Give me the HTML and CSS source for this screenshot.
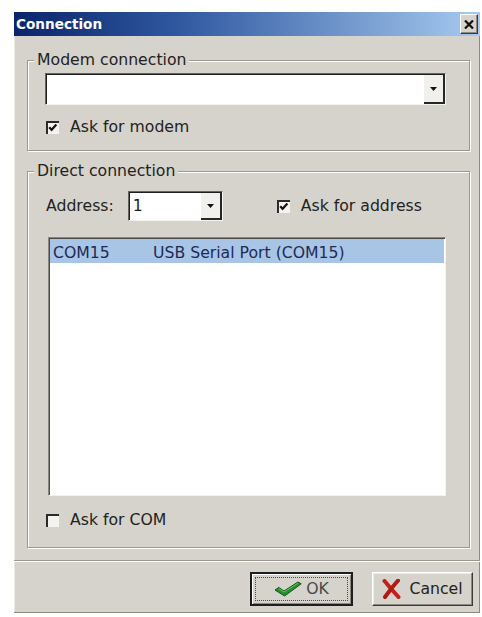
FILE: index.html
```html
<!DOCTYPE html>
<html lang="en">
<head>
<meta charset="utf-8">
<title>Connection</title>
<link rel="stylesheet" href="styles.css">
</head>
<body>
<div class="dialog">
  <div class="titlebar">
    <span class="title">Connection</span>
    <button class="close" type="button" aria-label="Close">
      <svg width="10" height="9" viewBox="0 0 10 9"><path d="M1 0.5 L9 8.5 M9 0.5 L1 8.5" stroke="#111" stroke-width="2.2" fill="none"/></svg>
    </button>
  </div>

  <div class="content">
    <div class="group group-modem">
      <div class="group-title">Modem connection</div>
      <div class="combo combo-modem">
        <div class="combo-value"></div>
        <div class="combo-btn"><svg width="7" height="4" viewBox="0 0 7 4"><path d="M0 0H7L3.5 4Z" fill="#111"/></svg></div>
      </div>
      <label class="check-row">
        <span class="checkbox"><svg width="13" height="13" viewBox="0 0 13 13"><rect width="13" height="13" fill="#f4f3f0"/><path d="M1 13V1H13" stroke="#2a2a2a" stroke-width="2" fill="none"/><path d="M3.2 6.2 L5.6 8.8 L10.4 3.6" stroke="#151515" stroke-width="2.2" fill="none"/></svg></span>
        <span>Ask for modem</span>
      </label>
    </div>

    <div class="group group-direct">
      <div class="group-title">Direct connection</div>
      <div class="address-row">
        <span class="field-label">Address:</span>
        <div class="combo combo-address">
          <div class="combo-value">1</div>
          <div class="combo-btn"><svg width="7" height="4" viewBox="0 0 7 4"><path d="M0 0H7L3.5 4Z" fill="#111"/></svg></div>
        </div>
        <label class="check-row check-address">
          <span class="checkbox"><svg width="13" height="13" viewBox="0 0 13 13"><rect width="13" height="13" fill="#f4f3f0"/><path d="M1 13V1H13" stroke="#2a2a2a" stroke-width="2" fill="none"/><path d="M3.2 6.2 L5.6 8.8 L10.4 3.6" stroke="#151515" stroke-width="2.2" fill="none"/></svg></span>
          <span>Ask for address</span>
        </label>
      </div>

      <div class="listbox">
        <div class="list-row selected">
          <span class="col-port">COM15</span>
          <span class="col-name">USB Serial Port (COM15)</span>
        </div>
      </div>

      <label class="check-row check-com">
        <span class="checkbox"><svg width="13" height="13" viewBox="0 0 13 13"><rect width="13" height="13" fill="#f4f3f0"/><path d="M1 13V1H13" stroke="#2a2a2a" stroke-width="2" fill="none"/></svg></span>
        <span>Ask for COM</span>
      </label>
    </div>
  </div>

  <div class="separator"></div>

  <div class="buttons">
    <button class="btn btn-default" type="button">
      <svg width="28" height="16" viewBox="0 0 28 16"><path d="M1 9 L4.8 6.4 L10 10 L24 1 L27.2 2.8 L10.6 15 Z" fill="#24902c" stroke="#0f5516" stroke-width="1" stroke-linejoin="round"/><path d="M5 7.6 L10 11 L24 2.2" stroke="#78cc7a" stroke-width="0.8" fill="none"/></svg>
      <span>OK</span>
    </button>
    <button class="btn" type="button">
      <svg width="19" height="20" viewBox="0 0 19 20"><path d="M2.5 2 C6 6 10 11 16.5 18" stroke="#c41f1b" stroke-width="4" stroke-linecap="round" fill="none"/><path d="M16 1.5 C12 6 8 11 3 18" stroke="#b01a17" stroke-width="4" stroke-linecap="round" fill="none"/></svg>
      <span>Cancel</span>
    </button>
  </div>
</div>
</body>
</html>
```
FILE: styles.css
```css
* {
  box-sizing: border-box;
}

html,
body {
  margin: 0;
  background: #ffffff;
}

body {
  font-family: "DejaVu Sans", Tahoma, sans-serif;
  font-size: 15.7px;
  line-height: 18px;
  color: #222222;
}

/* window frame */
.dialog {
  margin: 12px 0 0 14px;
  width: 466px;
  height: 601px;
  background: #d6d3cc;
  display: flex;
  flex-direction: column;
  box-shadow: inset -1px -1px 0 #8e8a83, inset 1px 0 0 #ebe9e4;
}

.titlebar {
  height: 24px;
  flex: none;
  display: flex;
  align-items: center;
  justify-content: space-between;
  padding: 0 2px 0 2px;
  background: linear-gradient(90deg, #0a246a 0%, #2f58a0 35%, #a6caf0 100%);
}

.title {
  color: #ffffff;
  font-weight: bold;
  font-size: 13.6px;
}

.close {
  width: 18px;
  height: 20px;
  padding: 0;
  display: flex;
  align-items: center;
  justify-content: center;
  background: #d6d3cc;
  border: 1px solid;
  border-color: #ffffff #3a3a3a #3a3a3a #ffffff;
  box-shadow: inset -1px -1px 0 #8e8a83;
}

.content {
  padding-top: 24px;
}

/* etched group boxes */
.group {
  margin: 0 10px 0 13px;
  border: 1px solid #9c988f;
  box-shadow: inset 1px 1px 0 #ffffff, 1px 1px 0 #ffffff;
  padding: 0 23px 13px 17px;
}

.group-direct {
  margin-top: 20px;
  padding-bottom: 17px;
}

.group-title {
  width: fit-content;
  margin: -10px 0 0 -11px;
  padding: 0 3px;
  background: #d6d3cc;
  line-height: 18px;
}

/* combo boxes */
.combo {
  display: flex;
  background: #ffffff;
  border-top: 1px solid #66635d;
  border-left: 1px solid #66635d;
  border-right: 1px solid #f4f3f0;
  border-bottom: 1px solid #f4f3f0;
  box-shadow: inset 1px 1px 0 #1e1e1e;
}

.combo-modem {
  margin-top: 4px;
  height: 32px;
}

.combo-value {
  flex: 1;
  display: flex;
  align-items: center;
  padding-left: 4px;
}

.combo-btn {
  width: 21px;
  margin: 1px 0 0 0;
  background: #f1f0ec;
  border-right: 2px solid #262626;
  border-bottom: 2px solid #262626;
  display: flex;
  align-items: center;
  justify-content: center;
}

.combo-address {
  width: 95px;
  height: 30px;
  margin-left: 14px;
}

/* check boxes */
.check-row {
  display: flex;
  align-items: center;
  gap: 11px;
  height: 20px;
  padding-left: 1px;
}

.group-modem .check-row {
  margin-top: 12px;
}

.checkbox {
  display: flex;
  width: 13px;
  height: 13px;
}

.address-row {
  display: flex;
  align-items: center;
  margin-top: 11px;
  height: 30px;
}

.field-label {
  padding-left: 1px;
}

.check-address {
  margin-left: 53px;
}

/* port list */
.listbox {
  margin: 16px 0 0 3px;
  width: 398px;
  height: 259px;
  background: #ffffff;
  border-top: 1px solid #8a8780;
  border-left: 1px solid #8a8780;
  border-right: 1px solid #f4f3f0;
  border-bottom: 1px solid #f4f3f0;
  box-shadow: inset 1px 1px 0 #4a4a4a;
  padding: 1px 1px 0 1px;
}

.list-row {
  display: flex;
  height: 24px;
  align-items: center;
  padding: 3px 0 0 3px;
  color: #1c2b55;
}

.list-row.selected {
  background: #a9c5e6;
}

.col-port {
  width: 100px;
}

.check-com {
  margin-top: 14px;
}

.separator {
  margin-top: 12px;
  height: 2px;
  border-top: 1px solid #9c988f;
  border-bottom: 1px solid #ffffff;
}

/* dialog buttons */
.buttons {
  display: flex;
  justify-content: flex-end;
  gap: 19px;
  margin-top: 10px;
  padding-right: 7px;
}

.btn {
  height: 34px;
  width: 101px;
  padding: 0;
  display: flex;
  align-items: center;
  justify-content: center;
  gap: 8px;
  font: inherit;
  color: #222222;
  background: #d6d3cc;
  border: 1px solid;
  border-color: #ffffff #3a3a3a #3a3a3a #ffffff;
  box-shadow: inset -1px -1px 0 #8e8a83, inset 1px 1px 0 #ecebe6;
}

.btn-default {
  width: 103px;
  gap: 4px;
  border: 2px solid #1e1e1e;
  box-shadow: inset 1px 1px 0 #ffffff, inset -1px -1px 0 #8e8a83;
  outline: 1px dotted #4a4a4a;
  outline-offset: -6px;
  color: #4a4a4a;
}
```
